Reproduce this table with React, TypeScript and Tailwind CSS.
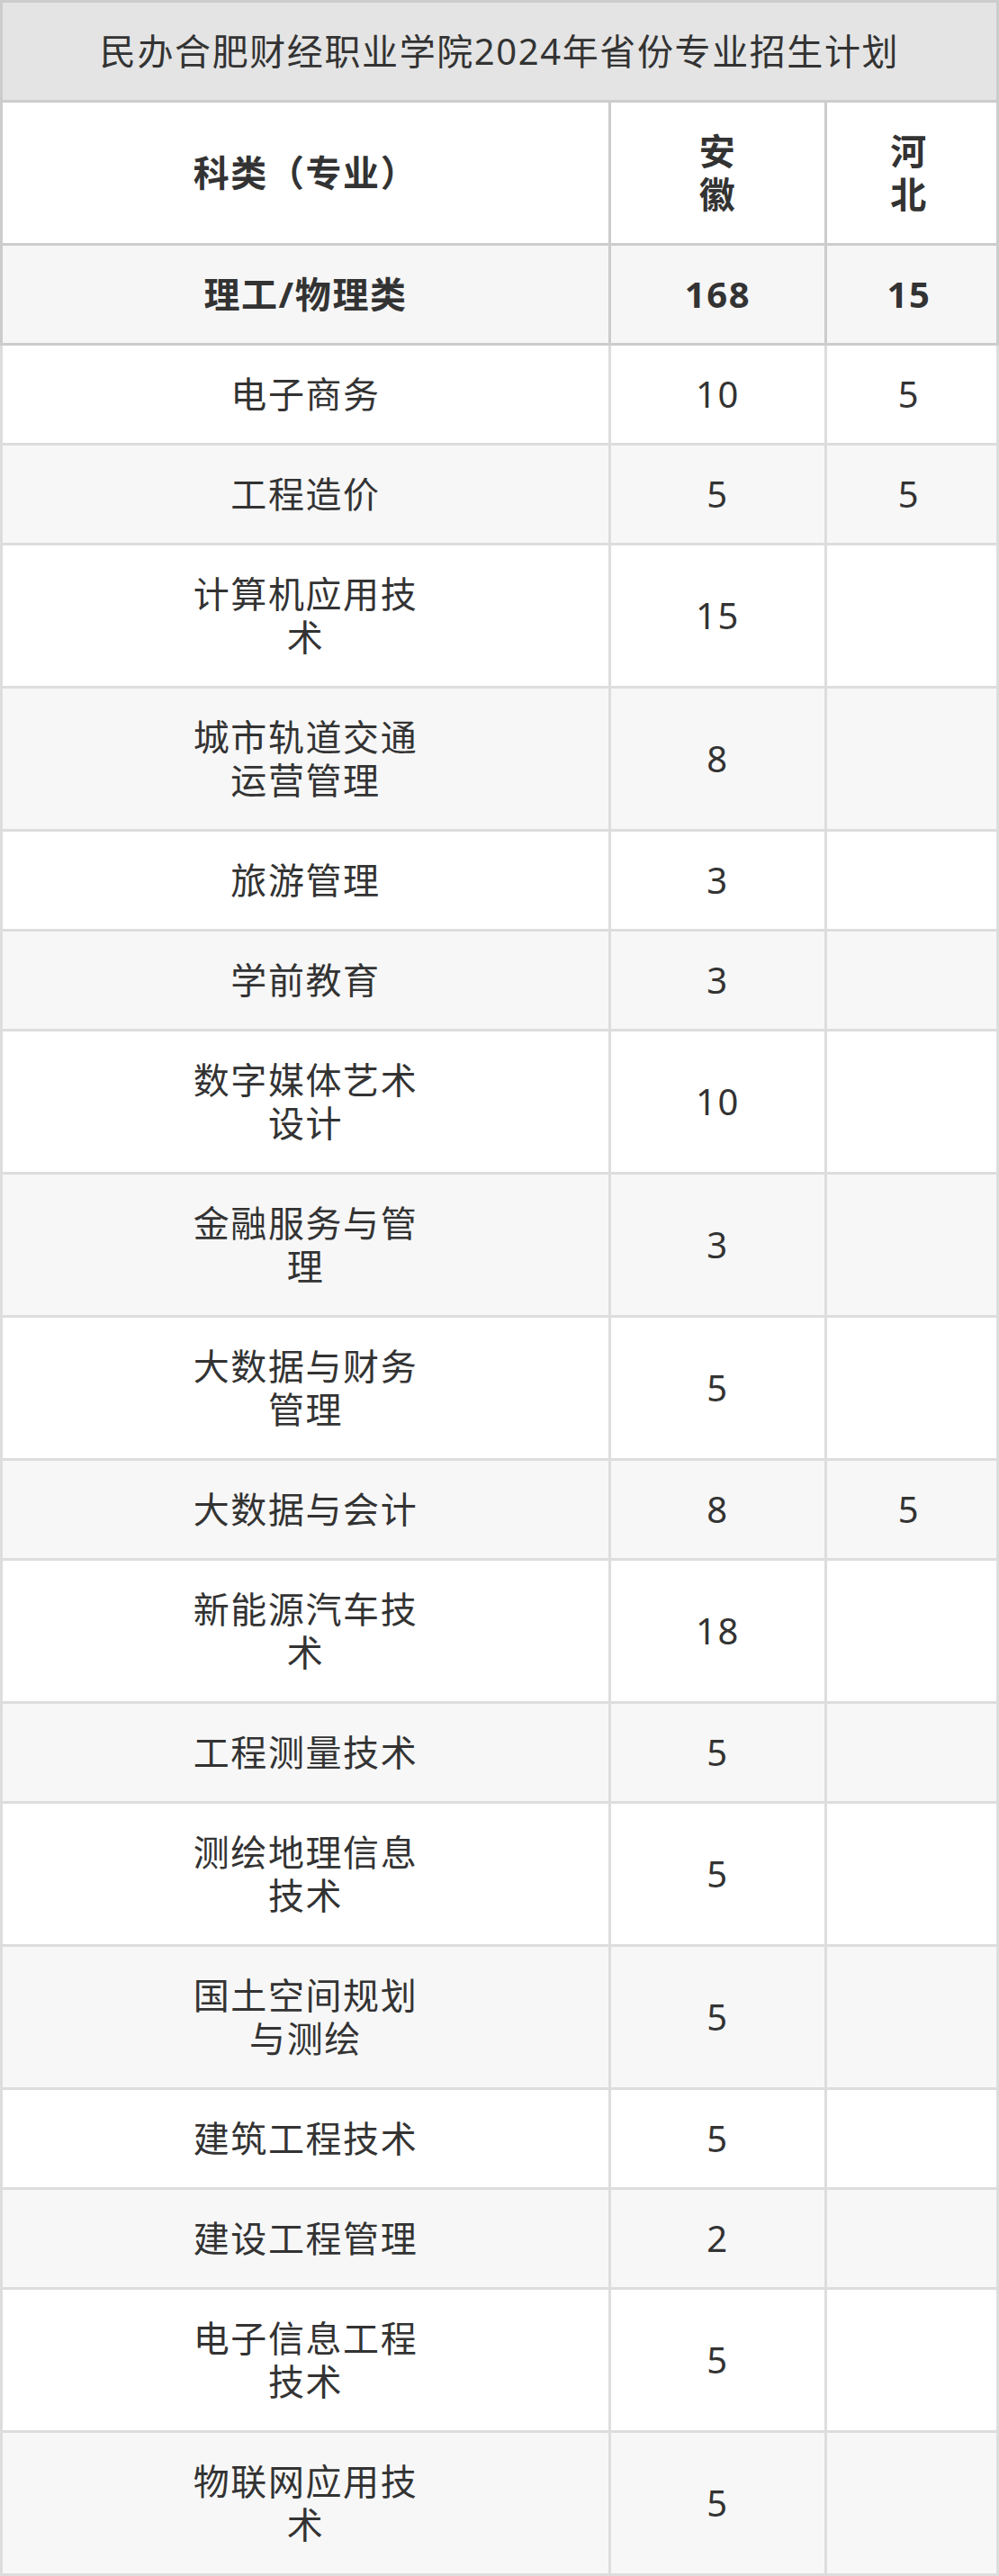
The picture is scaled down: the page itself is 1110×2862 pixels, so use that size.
import React from "react";

type Row = { name: string[]; ah: string; hb: string };

const rows: Row[] = [
  { name: ["电子商务"], ah: "10", hb: "5" },
  { name: ["工程造价"], ah: "5", hb: "5" },
  { name: ["计算机应用技", "术"], ah: "15", hb: "" },
  { name: ["城市轨道交通", "运营管理"], ah: "8", hb: "" },
  { name: ["旅游管理"], ah: "3", hb: "" },
  { name: ["学前教育"], ah: "3", hb: "" },
  { name: ["数字媒体艺术", "设计"], ah: "10", hb: "" },
  { name: ["金融服务与管", "理"], ah: "3", hb: "" },
  { name: ["大数据与财务", "管理"], ah: "5", hb: "" },
  { name: ["大数据与会计"], ah: "8", hb: "5" },
  { name: ["新能源汽车技", "术"], ah: "18", hb: "" },
  { name: ["工程测量技术"], ah: "5", hb: "" },
  { name: ["测绘地理信息", "技术"], ah: "5", hb: "" },
  { name: ["国土空间规划", "与测绘"], ah: "5", hb: "" },
  { name: ["建筑工程技术"], ah: "5", hb: "" },
  { name: ["建设工程管理"], ah: "2", hb: "" },
  { name: ["电子信息工程", "技术"], ah: "5", hb: "" },
  { name: ["物联网应用技", "术"], ah: "5", hb: "" },
];

function Lines({ lines }: { lines: string[] }) {
  return (
    <div>
      {lines.map((l, i) => (
        <div key={i}>{l}</div>
      ))}
    </div>
  );
}

export default function App() {
  return (
    <div
      className="w-[1110px] text-[40px] leading-[48px] tracking-[1.6px] text-[#333]"
      style={{ fontFamily: '"Noto Sans", "Noto Sans CJK SC", sans-serif' }}
    >
      {/* Title */}
      <div className="flex border-[3px] border-[#ccc] bg-[#e4e4e4]">
        <div className="flex-1 flex items-center justify-center py-[30px] text-center">
          民办合肥财经职业学院2024年省份专业招生计划
        </div>
      </div>
      {/* Header */}
      <div className="flex border-x-[3px] border-b-[3px] border-[#ccc] bg-white font-bold">
        <div className="w-[673px] flex items-center justify-center py-[30px] text-center">
          科类（专业）
        </div>
        <div className="w-[240px] border-l-[3px] border-[#ccc] flex items-center justify-center py-[30px] text-center">
          <Lines lines={["安", "徽"]} />
        </div>
        <div className="w-[185px] border-l-[3px] border-[#ccc] flex items-center justify-center py-[30px] text-center">
          <Lines lines={["河", "北"]} />
        </div>
      </div>
      {/* Category */}
      <div className="flex border-x-[3px] border-b-[3px] border-[#ccc] bg-[#f6f6f6] font-bold">
        <div className="w-[673px] flex items-center justify-center py-[30px] text-center">
          理工/物理类
        </div>
        <div className="w-[240px] border-l-[3px] border-[#ccc] flex items-center justify-center py-[30px] text-center">
          168
        </div>
        <div className="w-[185px] border-l-[3px] border-[#ccc] flex items-center justify-center py-[30px] text-center">
          15
        </div>
      </div>
      {/* Body */}
      {rows.map((r, i) => (
        <div
          key={i}
          className={
            "flex border-x-[3px] border-b-[3px] border-[#ddd] " +
            (i % 2 === 0 ? "bg-white" : "bg-[#f7f7f7]")
          }
        >
          <div className="w-[673px] flex items-center justify-center py-[30px] text-center">
            <Lines lines={r.name} />
          </div>
          <div className="w-[240px] border-l-[3px] border-[#ddd] flex items-center justify-center py-[30px] text-center">
            {r.ah}
          </div>
          <div className="w-[185px] border-l-[3px] border-[#ddd] flex items-center justify-center py-[30px] text-center">
            {r.hb}
          </div>
        </div>
      ))}
    </div>
  );
}
